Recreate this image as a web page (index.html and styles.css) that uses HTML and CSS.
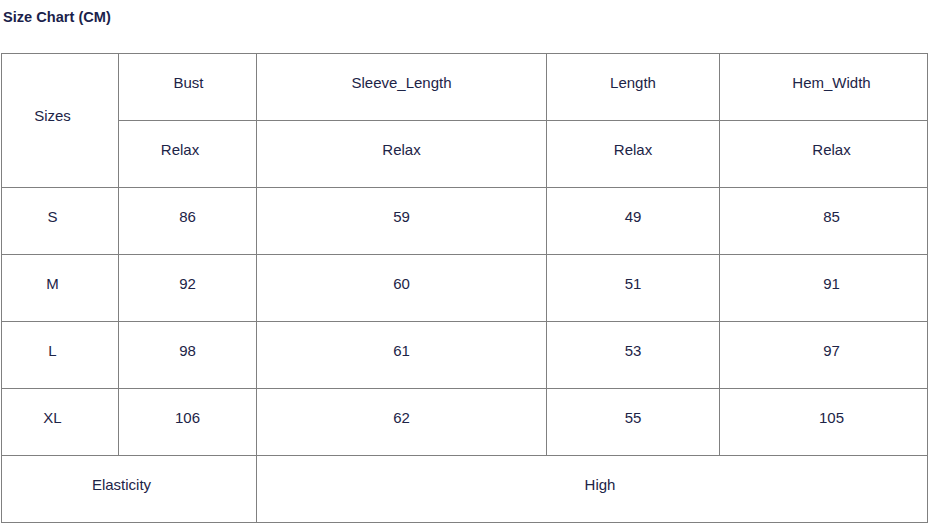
FILE: index.html
```html
<!DOCTYPE html>
<html>
<head>
<meta charset="utf-8">
<link rel="stylesheet" href="styles.css">
</head>
<body>
<h2 class="title">Size Chart (CM)</h2>
<div class="chart">
  <div class="cell rows2 sl">Sizes</div>
  <div class="cell nudge">Bust</div>
  <div class="cell">Sleeve_Length</div>
  <div class="cell">Length</div>
  <div class="cell sr">Hem_Width</div>
  <div class="cell sl">Relax</div>
  <div class="cell">Relax</div>
  <div class="cell">Relax</div>
  <div class="cell sr">Relax</div>

  <div class="cell sl">S</div><div class="cell">86</div><div class="cell">59</div><div class="cell">49</div><div class="cell sr">85</div>
  <div class="cell sl">M</div><div class="cell">92</div><div class="cell">60</div><div class="cell">51</div><div class="cell sr">91</div>
  <div class="cell sl">L</div><div class="cell">98</div><div class="cell">61</div><div class="cell">53</div><div class="cell sr">97</div>
  <div class="cell sl">XL</div><div class="cell">106</div><div class="cell">62</div><div class="cell">55</div><div class="cell sr">105</div>

  <div class="cell cols2 sl">Elasticity</div>
  <div class="cell cols3 sr">High</div>
</div>
</body>
</html>
```

FILE: styles.css
```css
html, body {
  margin: 0;
  padding: 0;
  background: #fff;
}
body {
  font-family: "Liberation Sans", Arial, sans-serif;
  color: #1d2447;
}
.title {
  margin: 0;
  padding: 8px 0 0 3px;
  height: 53px;
  box-sizing: border-box;
  font-size: 14.6px;
  font-weight: bold;
  line-height: 18px;
  color: #1b1f4b;
}
.chart {
  margin-left: 1px;
  width: 927px;
  box-sizing: border-box;
  display: grid;
  grid-template-columns: 116px 137px 289px 172px 207px;
  grid-auto-rows: 66px;
  gap: 1px;
  padding: 1px;
  background: #808080;
}
.cell {
  background: #fff;
  display: flex;
  align-items: center;
  justify-content: center;
  font-size: 15px;
  padding-bottom: 10px;
  box-sizing: border-box;
  color: #1d2447;
}
.sl { padding-right: 15px; }
.sr { padding-left: 16px; }
.nudge { padding-left: 2px; }
.rows2 { grid-row: span 2; }
.cols2 { grid-column: span 2; }
.cols3 { grid-column: span 3; }
```
